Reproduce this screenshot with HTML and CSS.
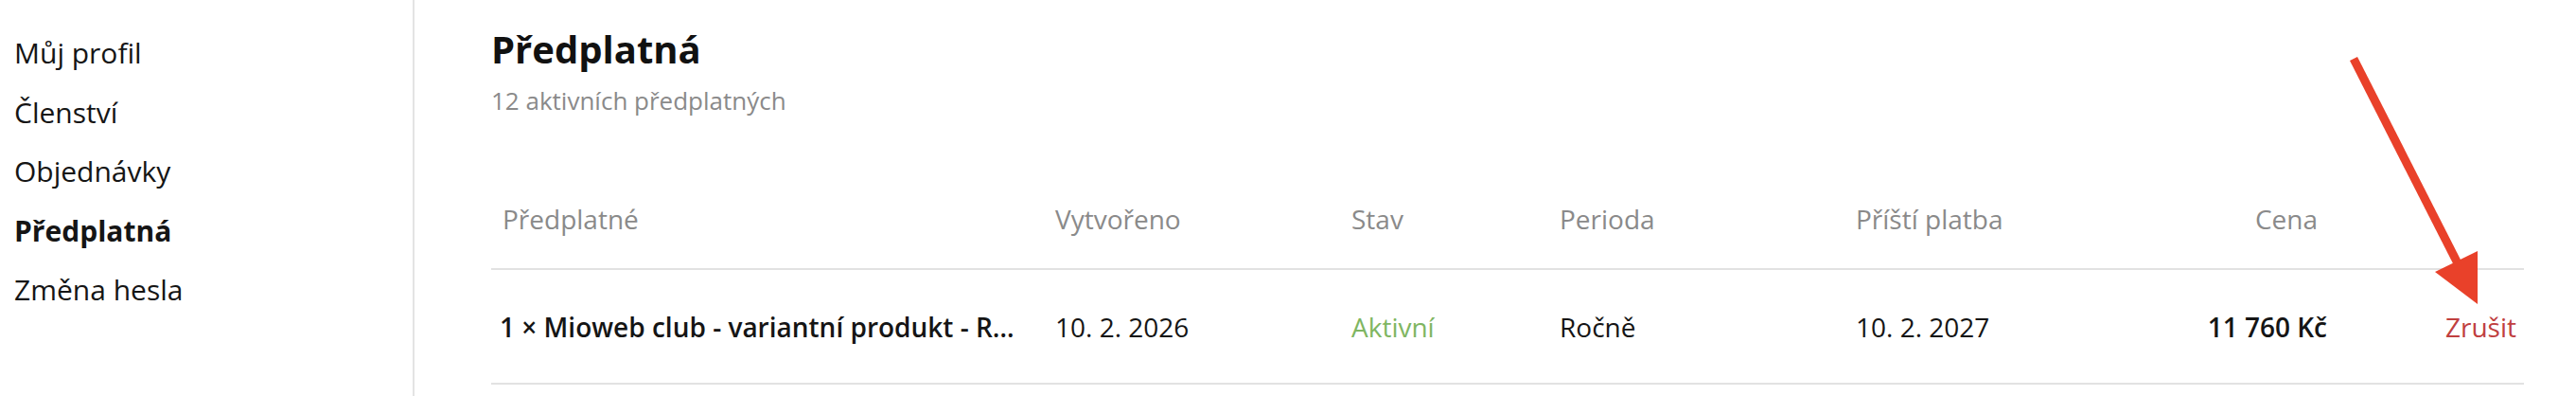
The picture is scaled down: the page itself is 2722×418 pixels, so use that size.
FILE: index.html
```html
<!DOCTYPE html>
<html lang="cs">
<head>
<meta charset="utf-8">
<title>Předplatná</title>
<link rel="stylesheet" href="styles.css">
</head>
<body>
<div class="page">
  <nav class="sidebar">
    <a class="nav-item" href="#">Můj profil</a>
    <a class="nav-item" href="#">Členství</a>
    <a class="nav-item" href="#">Objednávky</a>
    <a class="nav-item active" href="#">Předplatná</a>
    <a class="nav-item" href="#">Změna hesla</a>
  </nav>
  <main class="content">
    <h1 class="title">Předplatná</h1>
    <p class="subtitle">12 aktivních předplatných</p>
    <div class="table">
      <div class="row head">
        <div class="cell c1">Předplatné</div>
        <div class="cell c2">Vytvořeno</div>
        <div class="cell c3">Stav</div>
        <div class="cell c4">Perioda</div>
        <div class="cell c5">Příští platba</div>
        <div class="cell c6">Cena</div>
        <div class="cell c7"></div>
      </div>
      <div class="row body">
        <div class="cell c1 name">1 × Mioweb club - variantní produkt - Roční předplatné</div>
        <div class="cell c2">10. 2. 2026</div>
        <div class="cell c3 status">Aktivní</div>
        <div class="cell c4">Ročně</div>
        <div class="cell c5">10. 2. 2027</div>
        <div class="cell c6 price">11 760 Kč</div>
        <div class="cell c7"><a class="cancel" href="#">Zrušit</a></div>
      </div>
    </div>
  </main>
</div>
<svg class="arrow" width="170" height="290" viewBox="0 0 170 290" aria-hidden="true">
  <line x1="17" y1="12" x2="128" y2="230" stroke="#e9412a" stroke-width="9"/>
  <polygon points="103,237 148,215 148,271" fill="#e9412a"/>
</svg>
</body>
</html>
```
FILE: styles.css
```css
html, body {
  margin: 0;
  padding: 0;
  background: #fff;
}
body {
  font-family: "Open Sans", "Noto Sans", sans-serif;
  color: #151515;
  width: 2722px;
  height: 418px;
  overflow: hidden;
  position: relative;
}
.page {
  display: flex;
  height: 418px;
}
.sidebar {
  width: 422px;
  padding: 25px 0 0 15px;
  border-right: 2px solid #e4e4e4;
  display: flex;
  flex-direction: column;
}
.nav-item {
  font-size: 30px;
  line-height: 62.5px;
  color: #151515;
  text-decoration: none;
}
.nav-item.active {
  font-weight: 700;
}
.content {
  flex: 1;
  padding: 28px 55px 0 81px;
}
.title {
  margin: 0;
  font-size: 40px;
  line-height: 48px;
  font-weight: 700;
  color: #111;
}
.subtitle {
  margin: 12px 0 0;
  font-size: 26px;
  line-height: 36px;
  color: #8a8a8a;
}
.table {
  margin-top: 54px;
  font-size: 28px;
  line-height: 42px;
}
.row {
  display: grid;
  grid-template-columns: 580px 313px 220px 313px 325px 205px 192px;
  border-bottom: 2px solid #e2e2e2;
}
.head .cell {
  padding-top: 32px;
  padding-bottom: 31px;
  color: #8a8a8a;
}
.body .cell {
  padding-top: 38.5px;
  padding-bottom: 38.5px;
  color: #151515;
}
.cell {
  padding-left: 16px;
  white-space: nowrap;
}
.c1 {
  padding-left: 12px;
}
.body .c1 {
  padding-left: 9px;
}
.name {
  font-weight: 600;
  overflow: hidden;
  text-overflow: ellipsis;
  padding-right: 22px;
}
.c6 {
  text-align: right;
  padding-left: 0;
  padding-right: 16px;
}
.head .c6 {
  padding-right: 26px;
}
.price {
  font-weight: 600;
}
.c7 {
  text-align: right;
  padding-left: 0;
  padding-right: 8px;
}
.status {
  color: #7fb662 !important;
}
.cancel {
  color: #c0403f;
  text-decoration: none;
}
.arrow {
  position: absolute;
  left: 2470px;
  top: 50px;
}
```
